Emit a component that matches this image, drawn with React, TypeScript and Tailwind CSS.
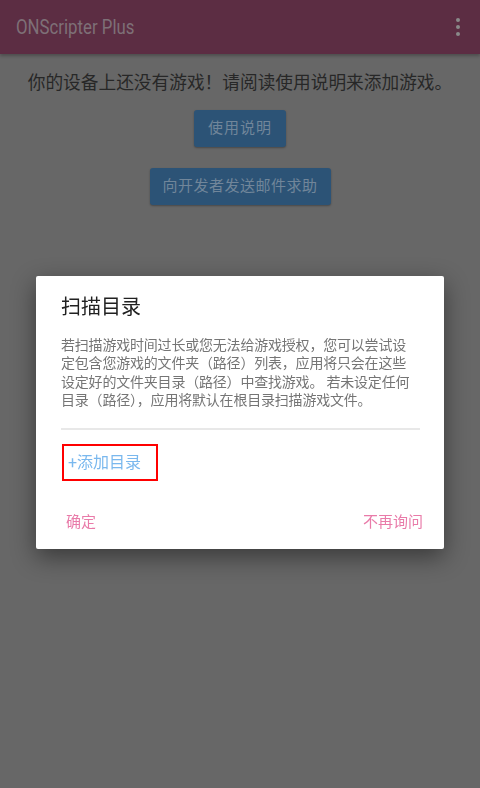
const cjk = { fontFamily: 'Roboto, "Noto Sans CJK SC", sans-serif' }

function OverflowDots() {
  return (
    <div className="flex flex-col items-center gap-[3px] pr-[20px]">
      <span className="w-[4px] h-[4px] rounded-full bg-[#8a8a8a]" />
      <span className="w-[4px] h-[4px] rounded-full bg-[#8a8a8a]" />
      <span className="w-[4px] h-[4px] rounded-full bg-[#8a8a8a]" />
    </div>
  )
}

function ScanDialog() {
  return (
    <div className="fixed inset-0 flex items-start justify-center pt-[276px]">
      <div className="w-[408px] h-[273px] bg-white rounded-[2px] shadow-[0_8px_24px_rgba(0,0,0,0.45)] flex flex-col px-[25px] pt-[16px]" style={cjk}>
        <h2 className="text-[20px] leading-[30px] text-[#212121]">扫描目录</h2>

        <p className="mt-[14px] text-[14px] leading-[18.3px] tracking-[-0.2px] text-[#757575]">
          若扫描游戏时间过长或您无法给游戏授权，您可以尝试设定包含您游戏的文件夹（路径）列表，应用将只会在这些设定好的文件夹目录（路径）中查找游戏。 若未设定任何目录（路径），应用将默认在根目录扫描游戏文件。
        </p>

        <div className="mt-[19px] h-[2px] w-[359px] bg-[#e8e8e8]" />

        {/* add-directory link, outlined in red */}
        <div className="mt-[14px] ml-[1px] w-[96px] h-[37px] border-2 border-[#ff0000] flex items-center pl-[4px]">
          <span className="text-[16px] leading-none text-[#7ab8ee]">+添加目录</span>
        </div>

        <div className="mt-[34px] mr-[-4px] flex items-center justify-between pl-[5px] text-[15px] leading-none text-[#e97ba9]">
          <span>确定</span>
          <span>不再询问</span>
        </div>
      </div>
    </div>
  )
}

export default function App() {
  return (
    <div className="relative w-[480px] h-[788px] bg-[#676767] overflow-hidden" style={cjk}>
      {/* App bar */}
      <div className="h-[54px] bg-[#5c2d43] flex items-center justify-between shadow-[0_2px_3px_rgba(0,0,0,0.25)]">
        <span
          className="ml-[16px] inline-block origin-left scale-x-[0.84] text-[20px] text-[#7e7077]"
          style={{ fontFamily: 'Roboto, sans-serif' }}
        >
          ONScripter Plus
        </span>
        <OverflowDots />
      </div>

      {/* Empty-state content */}
      <div className="flex flex-col items-center pt-[18px]">
        <p className="text-[17.7px] leading-[22px] text-[#272727]">你的设备上还没有游戏！请阅读使用说明来添加游戏。</p>

        <button className="mt-[16px] w-[92px] h-[37px] rounded-[3px] bg-[#2c5376] text-[15px] text-[#71869a] tracking-[1px] shadow-[0_1px_2px_rgba(0,0,0,0.3)]">
          使用说明
        </button>

        <button className="mt-[21px] w-[181px] h-[37px] rounded-[3px] bg-[#2c5376] text-[15px] text-[#71869a] tracking-[0.5px] shadow-[0_1px_2px_rgba(0,0,0,0.3)]">
          向开发者发送邮件求助
        </button>
      </div>

      <ScanDialog />
    </div>
  )
}
